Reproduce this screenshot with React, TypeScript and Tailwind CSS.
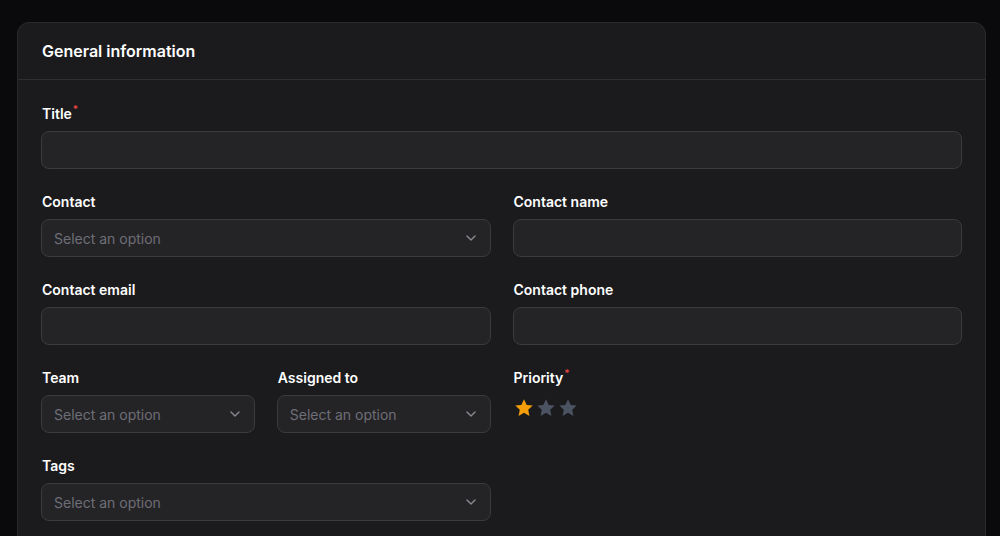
import { ChevronDown } from "lucide-react";

function Label({ text, required }: { text: string; required?: boolean }) {
  return (
    <div className="h-5 flex items-start pl-[1px] text-[14px] leading-5 font-semibold text-white">
      {text}
      {required && <span className="text-[10px] leading-3 text-[#ef4444] ml-[1px] -mt-[1px]">*</span>}
    </div>
  );
}

function TextInput() {
  return <div className="h-[38px] rounded-lg border border-[#3a3a3f] bg-[#242427]" />;
}

function Select() {
  return (
    <div className="h-[38px] rounded-lg border border-[#3a3a3f] bg-[#242427] flex items-center justify-between pl-3 pr-[11px]">
      <span className="text-[14px] text-[#6e6e76]">Select an option</span>
      <ChevronDown size={16} strokeWidth={2} className="text-[#8a8a93]" />
    </div>
  );
}

function Star({ filled }: { filled?: boolean }) {
  return (
    <svg width="22" height="22" viewBox="0 0 24 24" className={filled ? "text-[#f59e0b]" : "text-[#4b5261]"}>
      <path
        fill="currentColor"
        d="M12 2.5l2.9 6.1 6.6.8-4.9 4.6 1.3 6.6L12 17.3l-5.9 3.3 1.3-6.6L2.5 9.4l6.6-.8z"
      />
    </svg>
  );
}

function Field({ label, required, children }: { label: string; required?: boolean; children: React.ReactNode }) {
  return (
    <div className="flex flex-col gap-[7px]">
      <Label text={label} required={required} />
      {children}
    </div>
  );
}

export default function App() {
  return (
    <div
      className="h-[536px] bg-[#0a0a0c] pt-[22px] overflow-hidden"
      style={{ fontFamily: "Inter, 'Noto Sans', sans-serif" }}
    >
      <div className="ml-[17px] w-[969px] rounded-xl border border-[#2a2a2e] bg-[#1b1b1d] h-[600px]">
        <div className="h-[57px] border-b border-[#2f2f33] flex items-center px-6">
          <h2 className="text-[16px] font-semibold text-white">General information</h2>
        </div>

        <div className="px-[23px] pt-6 flex flex-col gap-[23px]">
          <Field label="Title" required>
            <TextInput />
          </Field>

          <div className="grid grid-cols-2 gap-x-[22px]">
            <Field label="Contact">
              <Select />
            </Field>
            <Field label="Contact name">
              <TextInput />
            </Field>
          </div>

          <div className="grid grid-cols-2 gap-x-[22px]">
            <Field label="Contact email">
              <TextInput />
            </Field>
            <Field label="Contact phone">
              <TextInput />
            </Field>
          </div>

          <div className="grid grid-cols-2 gap-x-[22px]">
            <div className="grid grid-cols-2 gap-x-[22px]">
              <Field label="Team">
                <Select />
              </Field>
              <Field label="Assigned to">
                <Select />
              </Field>
            </div>
            <Field label="Priority" required>
              <div className="flex items-center h-[26px]">
                <Star filled />
                <Star />
                <Star />
              </div>
            </Field>
          </div>

          <div className="grid grid-cols-2 gap-x-[22px]">
            <Field label="Tags">
              <Select />
            </Field>
          </div>
        </div>
      </div>
    </div>
  );
}
